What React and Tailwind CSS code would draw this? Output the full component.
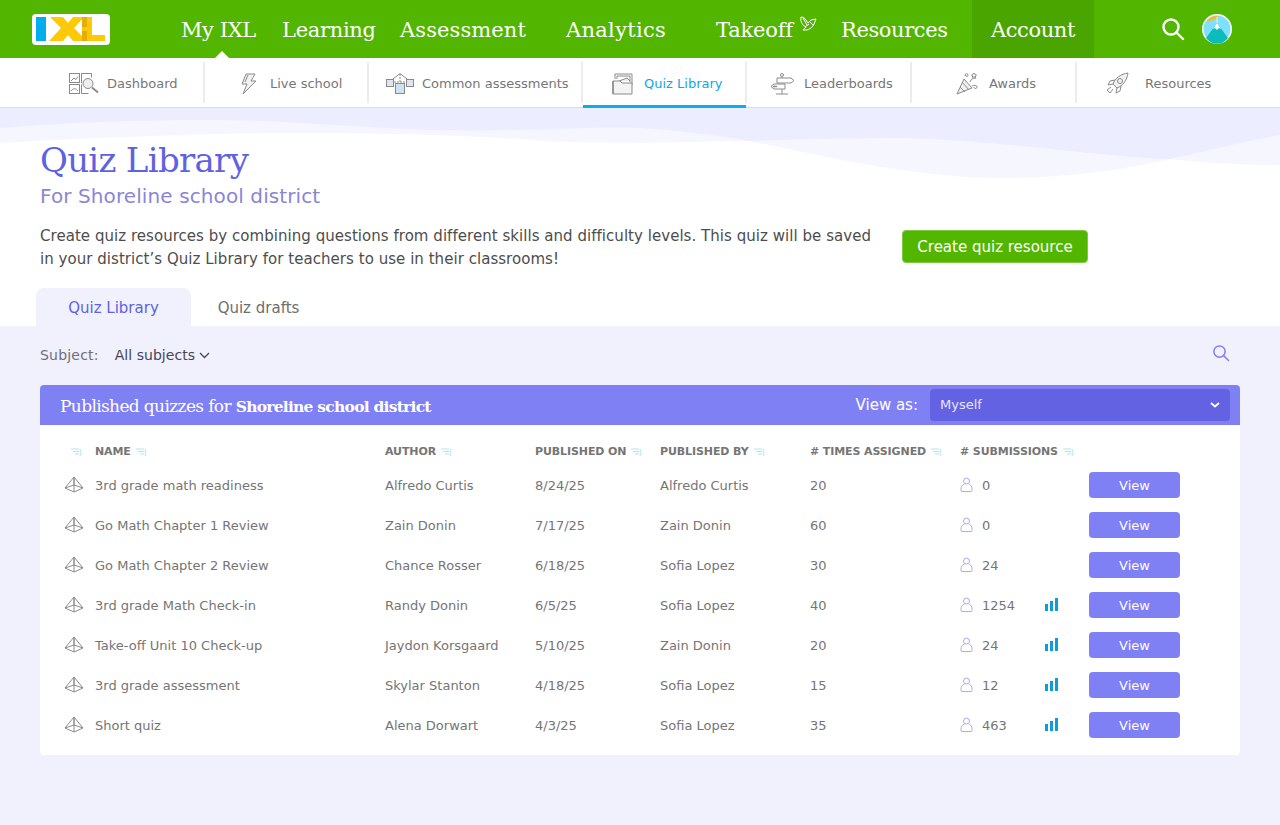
const serif = "font-['DejaVu_Serif',serif]"

const topNav = [
  { label: 'My IXL', className: 'w-[76px] ml-[71px] tracking-[-0.4px]' },
  { label: 'Learning', className: 'w-[94px] ml-[25px] tracking-[-0.3px]' },
  { label: 'Assessment', className: 'w-[127px] ml-[24px] tracking-[0.1px]' },
  { label: 'Analytics', className: 'w-[100px] ml-[39px] tracking-[0.3px]' },
  { label: 'Takeoff', className: 'w-[78px] ml-[50px] tracking-[-0.2px]' },
  { label: 'Resources', className: 'w-[108px] ml-[47px] tracking-[-0.4px]' },
]

const DashboardIcon = () => (
  <svg width="30" height="21" viewBox="0 0 30 21" fill="none" stroke="#8a8a8a" strokeWidth="1">
    <rect x="0.500" y="0.500" width="10" height="9" />
    <rect x="0.500" y="11.500" width="10" height="9" />
    <path d="M2 8l3-3 2 1.500 2-3M2 18c2-3 5-3 7 0M12.500 10V.5h10v4M12.500 11.500v9h7" />
    <circle cx="19" cy="10.500" r="5" fill="#eeeeee" />
    <path d="M23 14.500l6 5" strokeWidth="2" />
  </svg>
)

const BoltIcon = () => (
  <svg width="16" height="22" viewBox="0 0 16 22" fill="none" stroke="#8a8a8a" strokeWidth="1">
    <path d="M5 1h9l-4 7h5L2 21l4-10H1z" fill="#f2f2f2" />
    <path d="M7 2L4 9" />
  </svg>
)

const CommonIcon = () => (
  <svg width="28" height="21" viewBox="0 0 28 21" fill="none" stroke="#8a8a8a" strokeWidth="1">
    <rect x="0.500" y="6.500" width="7" height="7" fill="#dbe6f0" />
    <rect x="20.500" y="6.500" width="7" height="7" fill="#dbe6f0" />
    <rect x="9.500" y="10.500" width="9" height="10" fill="#cfe2f0" />
    <path d="M7 6l7-5.500L21 6" />
    <path d="M14 1v9M8 9h12" strokeDasharray="2 1" />
  </svg>
)

const FolderIcon = () => (
  <svg width="21" height="22" viewBox="0 0 21 22" fill="none" stroke="#8a8a8a" strokeWidth="1">
    <path d="M3 6V1h17v11" />
    <path d="M5 6V3h13v6" />
    <path d="M7 8l8-3 3 3" fill="#eeeeee" />
    <path d="M1 8h7l2 2h10v11H1z" fill="#f3f3f3" />
    <path d="M1 21V8" strokeWidth="1.500" />
  </svg>
)

const SignIcon = () => (
  <svg width="25" height="22" viewBox="0 0 25 22" fill="none" stroke="#8a8a8a" strokeWidth="1">
    <circle cx="12" cy="2" r="1.500" />
    <path d="M7 5h14l3 2.500-3 2.500H7zM15 11H4l-3 2.500L4 16h11zM12 4v1M12 16v5M6 21h12" />
    <path d="M3 13.500h4" strokeWidth="1.500" />
  </svg>
)

const PartyIcon = () => (
  <svg width="23" height="23" viewBox="0 0 23 23" fill="none" stroke="#8a8a8a" strokeWidth="1">
    <path d="M1 22L8 7l8 9z" fill="#f2f2f2" />
    <path d="M4 15l5 5M6 10l7 8" />
    <path d="M9 4c0-3 3-3 3-1s-2 2-2 0M14 10c1-3 3-4 6-4M16 14c2-1 5-1 5 1s-3 2-3 0" />
    <path d="M18 1l1 1.500 1.500.5-1 1 0 1.500-1.500-.7-1.500.7 0-1.500-1-1 1.500-.5z" />
  </svg>
)

const RocketIcon = () => (
  <svg width="23" height="23" viewBox="0 0 23 23" fill="none" stroke="#8a8a8a" strokeWidth="1">
    <path d="M7 12C9 6 15 2 22 1c-1 7-5 13-11 15z" fill="#f2f2f2" />
    <circle cx="14" cy="9" r="2.500" />
    <path d="M7 12l-5 1 2-4 5-1M11 16l-1 5 4-2 1-5" />
    <path d="M5 15l-4 3 1 1 1 1 1 1 3-4" />
  </svg>
)

const subNav = [
  { label: 'Dashboard', cell: 'w-[164px] pl-[28px] gap-[8px]', icon: <DashboardIcon /> },
  { label: 'Live school', cell: 'w-[164px] pl-[36px] gap-[13px]', icon: <BoltIcon /> },
  { label: 'Common assessments', cell: 'w-[214px] pl-[17px] gap-[8px]', icon: <CommonIcon /> },
  { label: 'Quiz Library', cell: 'w-[164px] pl-[29px] gap-[11px]', icon: <FolderIcon />, active: true },
  { label: 'Leaderboards', cell: 'w-[165px] pl-[23px] gap-[9px]', icon: <SignIcon /> },
  { label: 'Awards', cell: 'w-[165px] pl-[44px] gap-[10px]', icon: <PartyIcon /> },
  { label: 'Resources', cell: 'w-[163px] pl-[29px] gap-[16px]', icon: <RocketIcon />, last: true },
]

const columns = [
  { label: 'NAME', key: 'name' },
  { label: 'AUTHOR', key: 'author' },
  { label: 'PUBLISHED ON', key: 'on' },
  { label: 'PUBLISHED BY', key: 'by' },
  { label: '# TIMES ASSIGNED', key: 'times' },
  { label: '# SUBMISSIONS', key: 'subs' },
]

const quizzes = [
  { name: '3rd grade math readiness', author: 'Alfredo Curtis', on: '8/24/25', by: 'Alfredo Curtis', times: 20, subs: 0 },
  { name: 'Go Math Chapter 1 Review', author: 'Zain Donin', on: '7/17/25', by: 'Zain Donin', times: 60, subs: 0 },
  { name: 'Go Math Chapter 2 Review', author: 'Chance Rosser', on: '6/18/25', by: 'Sofia Lopez', times: 30, subs: 24 },
  { name: '3rd grade Math Check-in', author: 'Randy Donin', on: '6/5/25', by: 'Sofia Lopez', times: 40, subs: 1254, chart: true },
  { name: 'Take-off Unit 10 Check-up', author: 'Jaydon Korsgaard', on: '5/10/25', by: 'Zain Donin', times: 20, subs: 24, chart: true },
  { name: '3rd grade assessment', author: 'Skylar Stanton', on: '4/18/25', by: 'Sofia Lopez', times: 15, subs: 12, chart: true },
  { name: 'Short quiz', author: 'Alena Dorwart', on: '4/3/25', by: 'Sofia Lopez', times: 35, subs: 463, chart: true },
]

const gridCols = 'grid grid-cols-[30px_290px_150px_125px_150px_150px_129px_91px]'

const SortIcon = () => (
  <svg width="11" height="9" viewBox="0 0 11 9" className="shrink-0">
    <path d="M0 1h8M2 3.500h6M4 6h4" stroke="#a9e6f8" strokeWidth="1" />
    <path d="M9.500 1v7" stroke="#c4ecfa" strokeWidth="1.500" />
  </svg>
)

const PyramidIcon = () => (
  <svg width="20" height="17" viewBox="0 0 20 17" fill="none" stroke="#8c8c8c" strokeWidth="1" className="-ml-[1px] mb-[2px]">
    <path d="M10 1L1 12l9 4 9-4zM10 1v15M1 12l9-3 9 3M10 1v8" />
  </svg>
)

const PersonIcon = () => (
  <svg width="13" height="15" viewBox="0 0 13 15" fill="none" stroke="#a9a9f8" strokeWidth="1" className="mb-[2px]">
    <circle cx="6.500" cy="4" r="3" />
    <path d="M4.500 7C2 8 1 9.500 1 12v1.500a1 1 0 0 0 1 1h9a1 1 0 0 0 1-1V12c0-2.500-1-4-3-5" />
  </svg>
)

const BarsIcon = () => (
  <svg width="14" height="13" viewBox="0 0 14 13" fill="#0e9ce0">
    <rect x="0" y="6" width="3" height="7" />
    <rect x="5" y="3" width="3" height="10" />
    <rect x="10" y="0" width="3" height="13" />
  </svg>
)

const SearchIcon = ({ color, size, width }) => (
  <svg width={size} height={size} viewBox="0 0 24 24" fill="none" stroke={color} strokeWidth={width}>
    <circle cx="10" cy="10" r="7.500" />
    <path d="M15.500 15.500L22 22" strokeLinecap="round" />
  </svg>
)

const App = () => {
  return (
    <div className="min-h-[825px] bg-[#f1f1fe] font-['DejaVu_Sans',sans-serif]">
      {/* top bar */}
      <div className="h-[58px] bg-[#52b600] flex items-center relative">
        <div className="ml-[32px] w-[78px] h-[31px] bg-white rounded-[4px] shrink-0 flex items-center justify-center">
          <svg width="70" height="25" viewBox="0 0 70 25">
            <rect x="0" y="0" width="10" height="24" fill="#00aeef" />
            <path d="M14 0h13l5 6 5-6h11L38 11l13 13H37l-5-6-5 6H13l12-13z" fill="#ffc907" />
            <path d="M46 0h10v18h13v6H46z" fill="#ffc907" />
            <rect x="46" y="0" width="5" height="10" fill="#e8ab0c" />
            <rect x="46" y="14" width="5" height="10" fill="#e8ab0c" />
          </svg>
        </div>
        {topNav.map(item => (
          <div key={item.label} className={`${item.className} ${serif} text-white text-[21px] whitespace-nowrap shrink-0 leading-[58px] pt-[1px]`}>
            {item.label}
          </div>
        ))}
        {/* takeoff bird */}
        <svg width="18" height="16" viewBox="0 0 18 16" fill="none" stroke="white" strokeWidth="1" className="absolute left-[799px] top-[16px]">
          <path d="M2 1c2 0 4 1 5 3l2 3 3-3 5-1-2 5c-1 3-4 5-7 6H4l3-3C4 10 1 6 2 1z" />
          <path d="M4 2l4 7M6 11l4-3M11 6l3 3" />
        </svg>
        <div className={`w-[122px] ml-[23px] h-[58px] bg-[#4ba500] flex items-center justify-center ${serif} text-white text-[21px] tracking-[-0.4px] shrink-0 leading-[58px] pt-[1px]`}>
          Account
        </div>
        <div className="ml-[67px] shrink-0">
          <SearchIcon color="white" size={24} width={2.400} />
        </div>
        <div className="ml-[17px] shrink-0">
          <svg width="30" height="30" viewBox="0 0 30 30">
            <circle cx="15" cy="15" r="15" fill="white" />
            <circle cx="15" cy="15" r="13.500" fill="#7fe0fb" />
            <path d="M15 9L26 24a13.500 13.500 0 0 1-22 0z" fill="#0cbcbc" />
            <path d="M15 9l4 6-2-1-2 2-2-2-2 1z" fill="white" />
            <path d="M5 7c3-4 7-5 10-5v3c-3-1-5 1-7 2z" fill="#ffb81c" />
            <path d="M15 3v6" stroke="white" strokeWidth="0.800" />
          </svg>
        </div>
        <div className="absolute left-[215px] bottom-0 w-0 h-0 border-l-[7px] border-r-[7px] border-b-[7px] border-l-transparent border-r-transparent border-b-white" />
      </div>

      {/* sub nav */}
      <div className="h-[50px] bg-white border-b border-[#dcdce4] flex pl-[41px]">
        {subNav.map(item => (
          <div key={item.label} className={`${item.cell} h-[49px] pt-[2px] relative shrink-0 flex items-center text-[13px] ${item.active ? 'text-[#0fa8e6]' : 'text-[#777777]'}`}>
            {item.icon}
            <span className="whitespace-nowrap">{item.label}</span>
            {!item.last && <div className="absolute right-0 top-[4px] w-[2px] h-[41px] bg-[#ececec]" />}
            {item.active && <div className="absolute left-0 right-[1px] bottom-[-1px] h-[3px] bg-[#0aaeef]" />}
          </div>
        ))}
      </div>

      {/* hero */}
      <div className="relative h-[218px] bg-white">
        <svg width="1280" height="80" viewBox="0 0 1280 80" className="absolute left-0 top-0">
          <path d="M0 0V20C70 14 140 12 210 12C300 12 380 22 450 22C520 24 590 18 640 20C680 22 720 28 750 33C830 50 920 70 1000 70C1070 70 1120 62 1170 51C1210 42 1250 32 1280 27V0Z" fill="#9ea4fb" fillOpacity="0.1" />
          <path d="M0 0V35C90 30 200 25 300 25C380 25 450 27 520 31C560 34 600 35 640 35C680 34 720 33 750 33C800 31 850 30 900 30C960 31 1010 37 1080 44C1120 48 1150 51 1170 51C1210 55 1250 57 1280 57V0Z" fill="#9ea4fb" fillOpacity="0.1" />
        </svg>
        <div className="relative px-[40px] pt-[30px]">
          <h1 className={`${serif} text-[34px] leading-[44px] text-[#5e62e2] tracking-[-0.7px]`}>Quiz Library</h1>
          <div className="text-[20px] leading-[28px] text-[#8b85d6] tracking-[0.1px] h-[28px]">For Shoreline school district</div>
          <div className="flex mt-[15px]">
            <p className="w-[862px] pr-[24px] text-[15px] leading-[23px] text-[#4d4d4d] tracking-[0.04px]">
              Create quiz resources by combining questions from different skills and difficulty levels. This quiz will be saved in your district’s Quiz Library for teachers to use in their classrooms!
            </p>
            <button className="w-[186px] h-[33px] mt-[5px] pt-[1px] bg-[#52b600] border border-[#7ccb3c] rounded-[4px] text-white text-[15px]">
              Create quiz resource
            </button>
          </div>
        </div>
        <div className="absolute left-[36px] bottom-0 flex text-[15px]">
          <div className="w-[155px] h-[38px] pt-[2px] bg-[#f1f1fe] rounded-t-[8px] flex items-center justify-center text-[#5e62e2]">Quiz Library</div>
          <div className="w-[135px] h-[38px] pt-[2px] flex items-center justify-center text-[#6e6e6e]">Quiz drafts</div>
        </div>
      </div>

      {/* content */}
      <div className="px-[40px]">
        <div className="h-[59px] flex items-center text-[14px]">
          <span className="text-[#6e6e7a] tracking-[0.2px]">Subject:</span>
          <span className="ml-[16px] text-[#44445a] tracking-[0.05px]">All subjects</span>
          <svg width="11" height="7" viewBox="0 0 11 7" fill="none" stroke="#44445a" strokeWidth="1.300" className="ml-[4px]">
            <path d="M1 1l4.500 4.500L10 1" />
          </svg>
          <div className="ml-auto mr-[10px] mb-[5px]">
            <SearchIcon color="#8080f5" size={18} width={2} />
          </div>
        </div>

        <div className="rounded-[4px] overflow-hidden bg-white">
          <div className="h-[40px] bg-[#8080f5] flex items-center pl-[20px] pr-[10px] text-white">
            <div className={`${serif} text-[17px] tracking-[-0.63px] whitespace-nowrap pt-[3px]`}>
              Published quizzes for <strong className="font-bold text-[15.5px] tracking-[-0.75px]">Shoreline school district</strong>
            </div>
            <span className="ml-auto text-[15px]">View as:</span>
            <div className="ml-[12px] w-[300px] h-[32px] bg-[#6262e2] rounded-[4px] flex items-center justify-between pl-[10px] pr-[10px] text-[13px] text-[#e6e6ff]">
              Myself
              <svg width="10" height="6" viewBox="0 0 10 6" fill="none" stroke="white" strokeWidth="1.800">
                <path d="M1 1l4 3.500L9 1" />
              </svg>
            </div>
          </div>
          <div className="pl-[25px] pb-[10px]">
            <div className={`${gridCols} h-[40px] pt-[15px] items-center text-[11px] font-bold text-[#757575] tracking-[-0.1px]`}>
              <div className="pl-[6px]"><SortIcon /></div>
              {columns.map(col => (
                <div key={col.key} className="flex items-center gap-[5px] whitespace-nowrap">
                  {col.label}
                  <SortIcon />
                </div>
              ))}
            </div>
            {quizzes.map(quiz => (
              <div key={quiz.name} className={`${gridCols} h-[40px] items-center text-[13px] text-[#757575]`}>
                <PyramidIcon />
                <div className="pt-[2px]">{quiz.name}</div>
                <div className="pt-[2px]">{quiz.author}</div>
                <div className="pt-[2px]">{quiz.on}</div>
                <div className="pt-[2px]">{quiz.by}</div>
                <div className="pt-[2px]">{quiz.times}</div>
                <div className="flex items-center relative">
                  <PersonIcon />
                  <span className="ml-[9px] pt-[2px]">{quiz.subs}</span>
                  {quiz.chart && <div className="absolute left-[85px] top-[4px]"><BarsIcon /></div>}
                </div>
                <button className="h-[26px] pt-[2px] bg-[#8080f5] rounded-[4px] text-white text-[13px]">View</button>
              </div>
            ))}
          </div>
        </div>
      </div>
    </div>
  )
}

export default App
